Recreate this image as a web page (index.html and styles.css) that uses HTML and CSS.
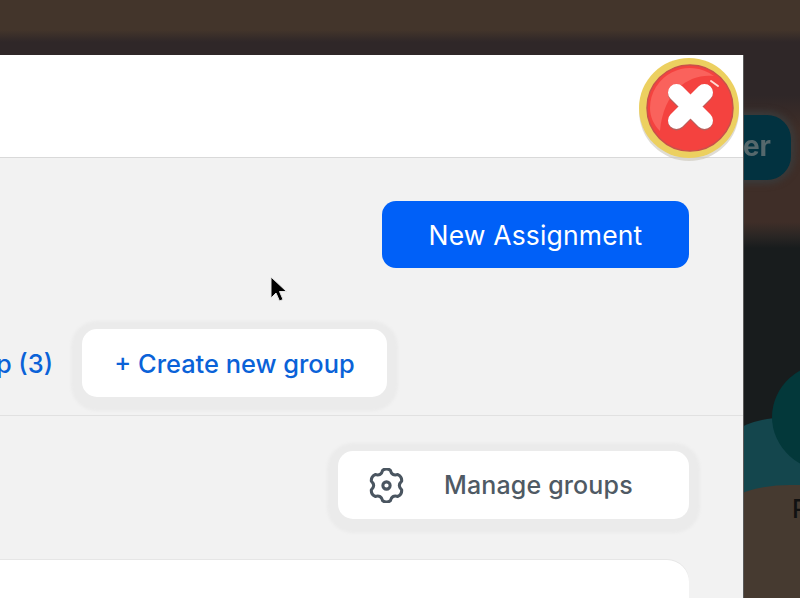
FILE: index.html
```html
<!DOCTYPE html>
<html lang="en">
<head>
  <meta charset="UTF-8">
  <meta name="viewport" content="width=device-width, initial-scale=1.0">
  <title>New Assignment</title>
  <link rel="stylesheet" href="styles.css">
</head>
<body>
  <div class="backdrop">
    <div class="bg-pill">Register</div>
    <div class="bg-wave"></div>
    <div class="bg-circle"></div>
    <div class="bg-label">R</div>
  </div>

  <main class="modal">
    <header class="modal-head"></header>
    <section class="toolbar">
      <button class="btn-primary">New Assignment</button>
    </section>
    <section class="group-row">
      <span class="group-tab">Assigned to group (3)</span>
      <button class="btn-white btn-create">+ Create new group</button>
    </section>
    <section class="manage-row">
      <button class="btn-white btn-manage">
        <svg class="gear" viewBox="0 0 24 24" fill="none" stroke="#4a5560" stroke-width="2.100" stroke-linejoin="round">
          <path d="M9.400 1.500Q12-.3 14.600 1.500Q15.600 5.760 19.790 4.500Q22.650 5.850 22.390 9Q19.200 12 22.390 15Q22.650 18.150 19.790 19.500Q15.600 18.240 14.600 22.500Q12 24.300 9.400 22.500Q8.400 18.240 4.210 19.500Q1.350 18.150 1.610 15Q4.800 12 1.610 9Q1.350 5.850 4.210 4.500Q8.400 5.760 9.400 1.500z"/>
          <circle cx="12" cy="12" r="2.500"/>
        </svg>
        <span>Manage groups</span>
      </button>
    </section>
    <section class="card"></section>
  </main>

  <button class="close-btn" aria-label="Close">
    <svg viewBox="0 0 102 106" width="102" height="106">
      <circle cx="51" cy="54" r="50" fill="#c9c5b8" opacity="0.6"/>
      <circle cx="51" cy="51" r="50" fill="#ecd060"/>
      <circle cx="52" cy="51" r="43" fill="#f4423f" stroke="#c9504a" stroke-width="1.500"/>
      <path d="M12 51a40 40 0 0 1 64-32c-22-3-50 12-54 55-6-6-10-14-10-23z" fill="#fa625c"/>
      <path d="M73 24l7 5" stroke="#ffd9d2" stroke-width="2" stroke-linecap="round"/>
      <path d="M38.500 37.500L66.500 65.500M66.500 37.500L38.500 65.500" stroke="#b9605c" stroke-width="17" stroke-linecap="round" transform="translate(0 -.5)"/>
      <path d="M38.500 36L66.500 64M66.500 36L38.500 64" stroke="#fff" stroke-width="17" stroke-linecap="round" transform="translate(0 -.5)"/>
    </svg>
  </button>

  <svg class="cursor" width="20" height="30" viewBox="0 0 20 30">
    <path d="M2 2v21l5-5 3.500 8 3.500-1.500-3.500-8h7z" fill="#000" stroke="#e4e4e4" stroke-width="1"/>
  </svg>
</body>
</html>
```

FILE: styles.css
```css
html, body {
  margin: 0;
  height: 100%;
}
body {
  position: relative;
  overflow: hidden;
  background: #181c1d;
  font-family: Inter, "Liberation Sans", sans-serif;
}
button {
  font-family: inherit;
  border: none;
}

/* blurred page behind the modal */
.backdrop {
  position: absolute;
  top: 0;
  left: 0;
  width: 800px;
  height: 598px;
  overflow: hidden;
  background: linear-gradient(#43352b 0, #43352b 30px, #2f2728 42px, #2f2728 95px, #3f2e28 130px, #3f2e28 222px, #2a2624 236px, #181c1d 248px);
}
.bg-pill {
  position: absolute;
  left: 640px;
  top: 115px;
  width: 151px;
  height: 65px;
  border-radius: 24px;
  background: #023240;
  box-shadow: 0 0 6px 4px #3a3a3a;
  color: #55686c;
  font-size: 28px;
  font-weight: 700;
  line-height: 62px;
  text-align: right;
  padding-right: 20px;
  box-sizing: border-box;
  filter: blur(0.7px);
}
.bg-wave {
  position: absolute;
  left: 730px;
  top: 417px;
  width: 200px;
  height: 120px;
  background: #14464d;
  border-radius: 60px 60px 0 0 / 25px 25px 0 0;
}
.bg-circle {
  position: absolute;
  left: 772px;
  top: 362px;
  width: 120px;
  height: 110px;
  border-radius: 50%;
  background: #03383a;
}
.bg-label {
  position: absolute;
  left: 720px;
  top: 485px;
  width: 200px;
  height: 113px;
  box-sizing: border-box;
  padding: 6px 0 0 72px;
  background: #463a30;
  border-radius: 70px 70px 0 0 / 30px 30px 0 0;
  color: #111;
  font-size: 25px;
  font-weight: 500;
  line-height: 36px;
}

.modal {
  position: relative;
  width: 743px;
  height: 543px;
  margin-top: 55px;
  background: #f2f2f2;
  box-shadow: 1px 0 0 #5a5a5a;
}
.modal-head {
  height: 102px;
  background: #fff;
  border-bottom: 1px solid #d9d9d9;
}
.toolbar {
  display: flex;
  justify-content: flex-end;
  padding: 43px 54px 0 0;
}
.btn-primary {
  width: 307px;
  height: 67px;
  border-radius: 14px;
  background: #0060f8;
  color: #fff;
  font-size: 26.5px;
  letter-spacing: 0.15px;
}
.group-row {
  display: flex;
  justify-content: flex-end;
  align-items: center;
  gap: 29px;
  height: 68px;
  margin-top: 61px;
  padding: 0 356px 18px 0;
  border-bottom: 1px solid #e1e1e1;
}
.group-tab {
  color: #0a62d8;
  font-size: 25.4px;
  font-weight: 550;
  white-space: nowrap;
}
.btn-white {
  background: #fff;
  border-radius: 15px;
  box-shadow: 0 3px 3px 11px #ebebeb;
}
.btn-create {
  flex: none;
  width: 305px;
  height: 68px;
  color: #0a62d8;
  font-size: 25.4px;
  font-weight: 550;
}
.manage-row {
  display: flex;
  justify-content: flex-end;
  padding: 35px 54px 0 0;
}
.btn-manage {
  display: flex;
  align-items: center;
  width: 351px;
  height: 68px;
  padding: 0 0 0 31px;
  color: #4f5a64;
  font-size: 25px;
  font-weight: 500;
  letter-spacing: 0.15px;
}
.gear {
  flex: none;
  width: 35px;
  height: 35px;
  margin-right: 40px;
}
.card {
  width: 800px;
  height: 38px;
  margin: 41px 0 0 -111px;
  background: #fff;
  border-radius: 22px 22px 0 0;
  box-shadow: 0 -1px 0 #e6e6e6;
}

.close-btn {
  position: absolute;
  left: 638px;
  top: 57px;
  padding: 0;
  background: none;
}
.cursor {
  position: absolute;
  left: 269px;
  top: 275px;
}
```
